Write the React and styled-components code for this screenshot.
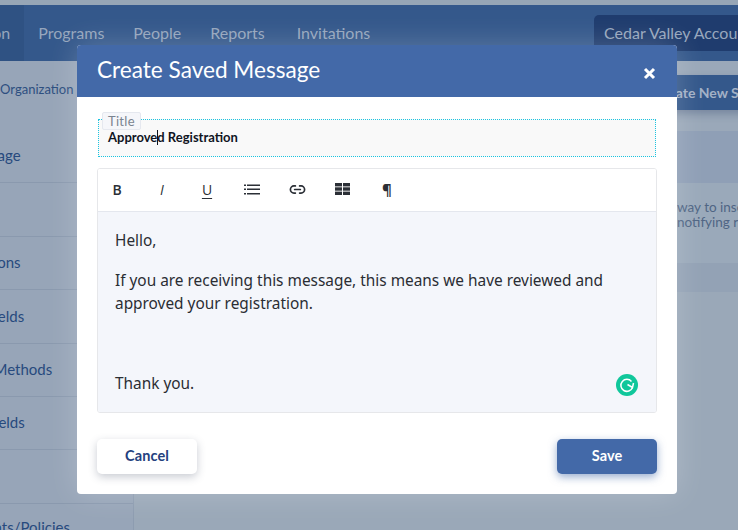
import React from "react"
import styled, { createGlobalStyle } from "styled-components"
import { Link2 } from "lucide-react"

const GlobalStyle = createGlobalStyle`
  html, body {
    margin: 0;
    padding: 0;
    height: 100%;
    overflow: hidden;
    background: #9aa8b8;
    font-family: Lato, "Liberation Sans", sans-serif;
  }
`

const Page = styled.div`
  width: 738px;
  height: 530px;
  position: relative;
  overflow: hidden;
  display: flex;
  flex-direction: column;
`

const TopStrip = styled.div`
  height: 5px;
  background: #97a6b6;
`

const Nav = styled.nav`
  height: 56px;
  background: #34588b;
  display: flex;
  align-items: flex-start;
  flex-shrink: 0;
`

const NavItem = styled.div`
  height: 100%;
  box-sizing: border-box;
  display: flex;
  align-items: center;
  font-size: 16px;
  color: #96a6bd;
  padding: 0 14px 2px ${p => p.$left || 0}px;
  background: ${p => (p.$active ? "#2f5283" : "transparent")};
  margin-left: ${p => p.$offset || 0}px;
  white-space: nowrap;
`

const Account = styled.div`
  margin-left: auto;
  margin-top: 10px;
  width: 144px;
  height: 36px;
  box-sizing: border-box;
  padding: 0 0 2px 10px;
  background: #1f3c6e;
  border-radius: 5px 0 0 5px;
  color: #98a7bd;
  font-size: 16px;
  display: flex;
  align-items: center;
  white-space: nowrap;
  overflow: hidden;
`

const Body = styled.div`
  flex: 1;
  display: flex;
  min-height: 0;
`

const Sidebar = styled.aside`
  width: 134px;
  flex-shrink: 0;
  background: #97a5b8;
  border-right: 1px solid #8d9cb0;
  overflow: hidden;
  padding-top: 14px;
  box-sizing: border-box;
`

const Crumb = styled.div`
  height: 54px;
  font-size: 13px;
  color: #2d4f80;
  margin-left: -29px;
  padding-top: 6px;
  box-sizing: border-box;
  white-space: nowrap;
`

const SideRow = styled.div`
  height: ${p => p.$h}px;
  box-sizing: border-box;
  border-bottom: 1px solid #8a99ae;
  display: flex;
  align-items: center;
  padding-bottom: 2px;
  font-size: 15px;
  color: #274a7e;
  white-space: nowrap;
`

const SideLabel = styled.span`
  margin-left: ${p => p.$shift}px;
`

const Main = styled.main`
  flex: 1;
  display: flex;
  flex-direction: column;
  min-width: 0;
`

const CreateBar = styled.div`
  height: 70px;
  width: 100%;
  background: #9aa8b9;
  display: flex;
  justify-content: flex-end;
  padding-top: 14px;
  box-sizing: border-box;
`

const CreateButton = styled.div`
  width: 210px;
  height: 35px;
  margin-right: -33px;
  flex-shrink: 0;
  box-sizing: border-box;
  padding-left: 93px;
  background: #34588b;
  border-radius: 4px;
  box-shadow: 0 4px 8px rgba(40, 60, 100, 0.3);
  color: #a3b1c6;
  font-size: 14px;
  font-weight: 700;
  display: flex;
  align-items: center;
  white-space: nowrap;
  overflow: hidden;
`

const PanelHead = styled.div`
  height: 52px;
  width: 100%;
  background: #8f9fb6;
`

const PanelBody = styled.div`
  height: 80px;
  width: 100%;
  background: #9aa9ba;
  box-sizing: border-box;
  padding: 17px 0 0 543px;
  font-size: 13.5px;
  line-height: 15px;
  color: #4f6584;
  white-space: nowrap;
  overflow: hidden;
`

const PanelFoot = styled.div`
  height: 29px;
  width: 100%;
  background: #93a2b5;
`

const Overlay = styled.div`
  position: absolute;
  left: 77px;
  top: 45px;
  width: 600px;
  height: 449px;
  background: #fff;
  border-radius: 4px;
  box-shadow: 0 0 30px rgba(255, 255, 255, 0.22);
  display: flex;
  flex-direction: column;
  overflow: hidden;
`

const ModalHeader = styled.header`
  height: 52px;
  flex-shrink: 0;
  box-sizing: border-box;
  background: #4369a8;
  color: #fff;
  display: flex;
  align-items: center;
  justify-content: space-between;
  padding: 0 21px 4px 20px;
`

const ModalTitle = styled.h2`
  margin: 0;
  font-size: 22.6px;
  font-weight: 400;
`

const CloseIcon = styled.svg`
  width: 13px;
  height: 13px;
  margin-top: 9px;
`

const ModalBody = styled.div`
  flex: 1;
  display: flex;
  flex-direction: column;
  padding: 22px 20px 20px;
`

const TitleField = styled.div`
  position: relative;
  height: 38px;
  margin-left: 1px;
  margin-right: 1px;
  box-sizing: border-box;
  border: 1px dotted #1cc4e0;
  background: #f9f9f9;
  padding: 9px 9px 0;
  font-size: 13px;
  font-weight: 700;
  color: #10151f;
  line-height: 16px;
`

const FieldLabel = styled.label`
  position: absolute;
  left: 3px;
  top: -8px;
  height: 18px;
  padding: 0 5px;
  box-sizing: border-box;
  border: 1px solid #e5e8ef;
  border-radius: 2px;
  background: #f5f6fa;
  font-size: 13px;
  letter-spacing: 0.3px;
  font-weight: 400;
  line-height: 16px;
  color: #79838f;
`

const Caret = styled.span`
  display: inline-block;
  width: 1px;
  height: 15px;
  background: #10151f;
  margin: 0 -1px 0 0;
  vertical-align: -3px;
`

const Editor = styled.div`
  margin-top: 11px;
  height: 245px;
  box-sizing: border-box;
  border: 1px solid #e6e7ea;
  border-radius: 3px;
  display: flex;
  flex-direction: column;
  overflow: hidden;
`

const Toolbar = styled.div`
  height: 43px;
  flex-shrink: 0;
  box-sizing: border-box;
  border-bottom: 1px solid #e4e7ee;
  background: #fff;
  display: flex;
  align-items: center;
  gap: 21px;
  padding: 0 0 2px 7px;
`

const ToolButton = styled.button`
  all: unset;
  width: 24px;
  height: 100%;
  display: flex;
  align-items: center;
  justify-content: center;
  font-family: "Open Sans", sans-serif;
  font-size: ${p => p.$size || 14}px;
  font-weight: ${p => p.$weight || 400};
  font-style: ${p => (p.$italic ? "italic" : "normal")};
  text-decoration: ${p => (p.$underline ? "underline" : "none")};
  text-underline-offset: 3px;
  color: #2b2f36;
`

const Content = styled.div`
  flex: 1;
  position: relative;
  background: #f4f6fb;
  padding: 17px 17px 0;
  font-family: "Noto Sans", sans-serif;
  font-size: 15.4px;
  line-height: 23px;
  color: #2a2d33;
`

const Para = styled.p`
  margin: 0 0 ${p => p.$gap || 0}px;
`

const Grammarly = styled.svg`
  position: absolute;
  right: 18px;
  bottom: 16px;
  width: 22px;
  height: 22px;
`

const Actions = styled.div`
  margin-top: 26px;
  display: flex;
  justify-content: space-between;
`

const ActionButton = styled.button`
  all: unset;
  width: 100px;
  height: 35px;
  box-sizing: border-box;
  padding-bottom: 2px;
  border-radius: 5px;
  text-align: center;
  font-family: Lato, sans-serif;
  font-size: 14.5px;
  letter-spacing: 0.1px;
  font-weight: 700;
  background: ${p => (p.$primary ? "#4369a8" : "#fff")};
  color: ${p => (p.$primary ? "#fff" : "#24417e")};
  box-shadow: ${p =>
    p.$primary
      ? "0 3px 8px rgba(67, 105, 168, 0.55)"
      : "0 3px 8px rgba(40, 50, 80, 0.25)"};
`

const BulletIcon = () => (
  <svg width="16" height="11" viewBox="0 0 16 11" fill="#2b2f36">
    <rect x="0" y="0.5" width="2" height="1.5" />
    <rect x="0" y="4.5" width="2" height="1.5" />
    <rect x="0" y="9" width="2" height="1.5" />
    <rect x="3" y="0.5" width="13" height="1.5" />
    <rect x="3" y="4.5" width="13" height="1.5" />
    <rect x="3" y="9" width="13" height="1.5" />
  </svg>
)

const TableIcon = () => (
  <svg width="15" height="12" viewBox="0 0 15 12" fill="#2b2f36">
    <rect x="0" y="0" width="7" height="3.4" />
    <rect x="8" y="0" width="7" height="3.4" />
    <rect x="0" y="4.3" width="7" height="3.4" />
    <rect x="8" y="4.3" width="7" height="3.4" />
    <rect x="0" y="8.6" width="7" height="3.4" />
    <rect x="8" y="8.6" width="7" height="3.4" />
  </svg>
)

const sideRows = [
  { label: "Registration Page", shift: -94, h: 54 },
  { label: "", shift: 0, h: 54 },
  { label: "Notifications", shift: -64, h: 53 },
  { label: "Custom Fields", shift: -69, h: 54 },
  { label: "Payment Methods", shift: -68, h: 53 },
  { label: "Account Fields", shift: -72, h: 53 },
  { label: "", shift: 0, h: 54 },
]

const App = () => (
  <Page>
    <GlobalStyle />
    <TopStrip />
    <Nav>
      <NavItem $active $offset={-80}>Organization</NavItem>
      <NavItem $left={14}>Programs</NavItem>
      <NavItem $left={15}>People</NavItem>
      <NavItem $left={15}>Reports</NavItem>
      <NavItem $left={18}>Invitations</NavItem>
      <Account>Cedar Valley Accounts</Account>
    </Nav>
    <Body>
      <Sidebar>
        <Crumb>Your Organization</Crumb>
        {sideRows.map((row, i) => (
          <SideRow key={i} $h={row.h}>
            <SideLabel $shift={row.shift}>{row.label}</SideLabel>
          </SideRow>
        ))}
        <SideRow $h={48}>
          <SideLabel $shift={-62}>Documents/Policies</SideLabel>
        </SideRow>
      </Sidebar>
      <Main>
        <CreateBar>
          <CreateButton>Create New Saved Message</CreateButton>
        </CreateBar>
        <PanelHead />
        <PanelBody>
          way to insert common text<br />
          notifying registrants
        </PanelBody>
        <PanelFoot />
      </Main>
    </Body>

    <Overlay>
      <ModalHeader>
        <ModalTitle>Create Saved Message</ModalTitle>
        <CloseIcon viewBox="0 0 13 13">
          <path d="M2 2 L11 11 M11 2 L2 11" stroke="#fff" strokeWidth="3" />
        </CloseIcon>
      </ModalHeader>
      <ModalBody>
        <TitleField>
          <FieldLabel>Title</FieldLabel>
          Approve<Caret />d Registration
        </TitleField>
        <Editor>
          <Toolbar>
            <ToolButton $weight={600}>B</ToolButton>
            <ToolButton $italic>I</ToolButton>
            <ToolButton $underline>U</ToolButton>
            <ToolButton><BulletIcon /></ToolButton>
            <ToolButton><Link2 size={17} strokeWidth={2.4} /></ToolButton>
            <ToolButton><TableIcon /></ToolButton>
            <ToolButton $weight={700} $size={15}>¶</ToolButton>
          </Toolbar>
          <Content>
            <Para $gap={17}>Hello,</Para>
            <Para $gap={57}>
              If you are receiving this message, this means we have reviewed and
              <br />
              approved your registration.
            </Para>
            <Para>Thank you.</Para>
            <Grammarly viewBox="0 0 22 22">
              <circle cx="11" cy="11" r="11" fill="#10c79b" />
              <path
                d="M15.5 7.5 A6 6 0 1 0 16.5 13.5 M11.5 10.5 L16.5 13.5 L17.5 9"
                fill="none"
                stroke="#fff"
                strokeWidth="1.5"
              />
            </Grammarly>
          </Content>
        </Editor>
        <Actions>
          <ActionButton>Cancel</ActionButton>
          <ActionButton $primary>Save</ActionButton>
        </Actions>
      </ModalBody>
    </Overlay>
  </Page>
)

export default App
